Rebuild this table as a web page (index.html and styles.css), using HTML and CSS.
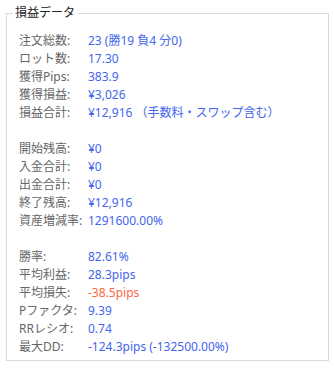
FILE: index.html
```html
<!DOCTYPE html>
<html lang="ja">
<head>
<meta charset="utf-8">
<link rel="stylesheet" href="styles.css">
</head>
<body>
<fieldset class="panel">
  <legend class="panel-title">損益データ</legend>
  <div class="group">
    <div class="row"><span class="label">注文総数:</span><span class="value">23 (勝19 負4 分0)</span></div>
    <div class="row"><span class="label">ロット数:</span><span class="value">17.30</span></div>
    <div class="row"><span class="label">獲得Pips:</span><span class="value">383.9</span></div>
    <div class="row"><span class="label">獲得損益:</span><span class="value">¥3,026</span></div>
    <div class="row"><span class="label">損益合計:</span><span class="value">¥12,916 （手数料・スワップ含む）</span></div>
  </div>
  <div class="group">
    <div class="row"><span class="label">開始残高:</span><span class="value">¥0</span></div>
    <div class="row"><span class="label">入金合計:</span><span class="value">¥0</span></div>
    <div class="row"><span class="label">出金合計:</span><span class="value">¥0</span></div>
    <div class="row"><span class="label">終了残高:</span><span class="value">¥12,916</span></div>
    <div class="row"><span class="label">資産増減率:</span><span class="value">1291600.00%</span></div>
  </div>
  <div class="group">
    <div class="row"><span class="label">勝率:</span><span class="value">82.61%</span></div>
    <div class="row"><span class="label">平均利益:</span><span class="value">28.3pips</span></div>
    <div class="row"><span class="label">平均損失:</span><span class="value value-loss">-38.5pips</span></div>
    <div class="row"><span class="label">Pファクタ:</span><span class="value">9.39</span></div>
    <div class="row"><span class="label">RRレシオ:</span><span class="value">0.74</span></div>
    <div class="row"><span class="label">最大DD:</span><span class="value">-124.3pips (-132500.00%)</span></div>
  </div>
</fieldset>
</body>
</html>
```
FILE: styles.css
```css
html, body {
  margin: 0;
  padding: 0;
  background: #fff;
}
body {
  padding: 4px 6px 0 6px;
  font-family: "Noto Sans", "Noto Sans CJK JP", sans-serif;
  font-size: 12px;
  line-height: 18px;
}
.panel {
  margin: 0;
  width: 323px;
  box-sizing: border-box;
  border: 1px solid #d9d9d9;
  padding: 10px 6px 4px 6px;
}
.panel-title {
  padding: 0 3px 0 2px;
  color: #222;
  font-size: 12px;
  line-height: 18px;
}
.group {
  padding-left: 6px;
}
.group + .group {
  margin-top: 18px;
}
.row {
  display: flex;
  gap: 2px;
  white-space: nowrap;
}
.label {
  min-width: 67px;
  color: #666;
}
.value {
  color: #4466ee;
}
.value-loss {
  color: #ff6644;
}
```
